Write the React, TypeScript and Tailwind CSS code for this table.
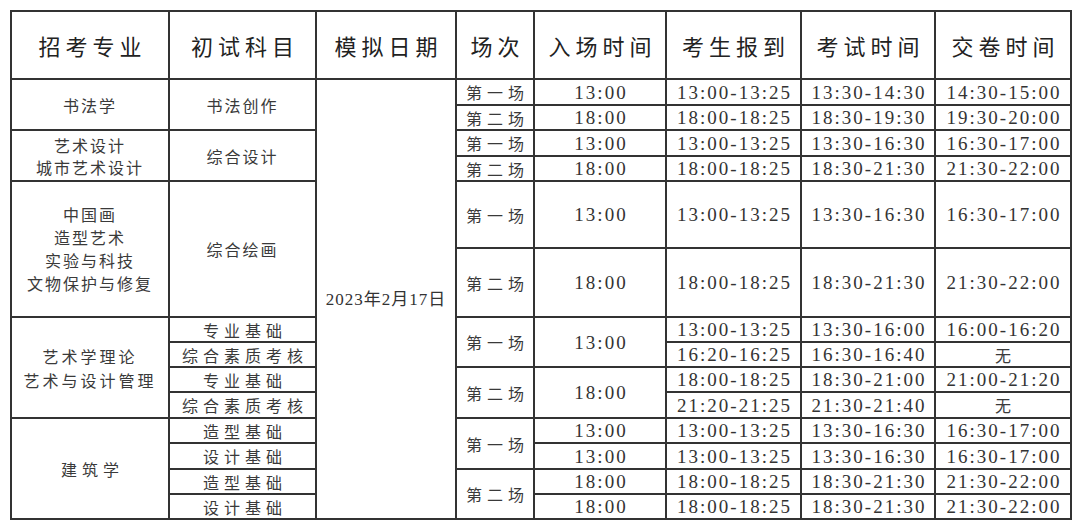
import React from "react";

const line = "border-2 border-[#333]";
const cjk = "font-['Noto_Sans_CJK_SC',sans-serif] text-[16px] text-[#3a3a3a]";
const num = "font-['Liberation_Serif','Noto_Sans_CJK_SC',serif] text-[19px] tracking-[2px] pl-[2px] text-[#333]";

function Td({
  children,
  rowSpan,
  className = "",
}: {
  children?: React.ReactNode;
  rowSpan?: number;
  className?: string;
}) {
  return (
    <td rowSpan={rowSpan} className={`${line} p-0 text-center align-middle leading-none ${className}`}>
      {children}
    </td>
  );
}

// 场次 cell
function Session({ n, rowSpan }: { n: string; rowSpan?: number }) {
  return (
    <Td rowSpan={rowSpan} className={`${cjk} tracking-[5px] pl-[5px]`}>
      {n}
    </Td>
  );
}

function T({ children, rowSpan }: { children: React.ReactNode; rowSpan?: number }) {
  return (
    <Td rowSpan={rowSpan} className={num}>
      {children}
    </Td>
  );
}

function Times({ a, b, c }: { a: string; b: string; c: string }) {
  return (
    <>
      <T>{a}</T>
      <T>{b}</T>
      {c === "无" ? <Td className={cjk}>无</Td> : <T>{c}</T>}
    </>
  );
}

const headers = ["招考专业", "初试科目", "模拟日期", "场次", "入场时间", "考生报到", "考试时间", "交卷时间"];

export default function App() {
  return (
    <div className="min-h-[530px] w-[1080px] bg-white pl-[10px] pt-[10px]">
      <table className="w-[1060px] table-fixed border-collapse">
        <colgroup>
          <col className="w-[158px]" />
          <col className="w-[147px]" />
          <col className="w-[140px]" />
          <col className="w-[78px]" />
          <col className="w-[132px]" />
          <col className="w-[135px]" />
          <col className="w-[134px]" />
          <col className="w-[136px]" />
        </colgroup>
        <thead>
          <tr className="h-[68px]">
            {headers.map((h) => (
              <th
                key={h}
                className={`${line} p-0 text-center align-middle font-['Noto_Sans_CJK_SC',sans-serif] text-[22px] font-normal tracking-[5px] pl-[5px] text-[#222]`}
              >
                {h}
              </th>
            ))}
          </tr>
        </thead>
        <tbody>
          <tr className="h-[26px]">
            <Td rowSpan={2} className={`${cjk} tracking-[2px]`}>书法学</Td>
            <Td rowSpan={2} className={`${cjk} tracking-[2px]`}>书法创作</Td>
            <Td rowSpan={14} className="font-['Liberation_Serif','Noto_Sans_CJK_SC',serif] text-[17px] tracking-[1px] text-[#333]">
              2023年2月17日
            </Td>
            <Session n="第一场" />
            <T>13:00</T>
            <Times a="13:00-13:25" b="13:30-14:30" c="14:30-15:00" />
          </tr>
          <tr className="h-[25px]">
            <Session n="第二场" />
            <T>18:00</T>
            <Times a="18:00-18:25" b="18:30-19:30" c="19:30-20:00" />
          </tr>
          <tr className="h-[26px]">
            <Td rowSpan={2} className={`${cjk} tracking-[2px]`}>
              <div className="leading-[22px]">
                艺术设计
                <br />
                城市艺术设计
              </div>
            </Td>
            <Td rowSpan={2} className={`${cjk} tracking-[2px]`}>综合设计</Td>
            <Session n="第一场" />
            <T>13:00</T>
            <Times a="13:00-13:25" b="13:30-16:30" c="16:30-17:00" />
          </tr>
          <tr className="h-[25px]">
            <Session n="第二场" />
            <T>18:00</T>
            <Times a="18:00-18:25" b="18:30-21:30" c="21:30-22:00" />
          </tr>
          <tr className="h-[67px]">
            <Td rowSpan={2} className={`${cjk} tracking-[2px]`}>
              <div className="leading-[23px]">
                中国画
                <br />
                造型艺术
                <br />
                实验与科技
                <br />
                文物保护与修复
              </div>
            </Td>
            <Td rowSpan={2} className={`${cjk} tracking-[2px]`}>综合绘画</Td>
            <Session n="第一场" />
            <T>13:00</T>
            <Times a="13:00-13:25" b="13:30-16:30" c="16:30-17:00" />
          </tr>
          <tr className="h-[69px]">
            <Session n="第二场" />
            <T>18:00</T>
            <Times a="18:00-18:25" b="18:30-21:30" c="21:30-22:00" />
          </tr>
          <tr className="h-[25px]">
            <Td rowSpan={4} className={`${cjk} tracking-[3px]`}>
              <div className="leading-[24px]">
                艺术学理论
                <br />
                艺术与设计管理
              </div>
            </Td>
            <Td className={`${cjk} tracking-[5px] pl-[5px]`}>专业基础</Td>
            <Session n="第一场" rowSpan={2} />
            <T rowSpan={2}>13:00</T>
            <Times a="13:00-13:25" b="13:30-16:00" c="16:00-16:20" />
          </tr>
          <tr className="h-[25px]">
            <Td className={`${cjk} tracking-[5px] pl-[5px]`}>综合素质考核</Td>
            <Times a="16:20-16:25" b="16:30-16:40" c="无" />
          </tr>
          <tr className="h-[25px]">
            <Td className={`${cjk} tracking-[5px] pl-[5px]`}>专业基础</Td>
            <Session n="第二场" rowSpan={2} />
            <T rowSpan={2}>18:00</T>
            <Times a="18:00-18:25" b="18:30-21:00" c="21:00-21:20" />
          </tr>
          <tr className="h-[26px]">
            <Td className={`${cjk} tracking-[5px] pl-[5px]`}>综合素质考核</Td>
            <Times a="21:20-21:25" b="21:30-21:40" c="无" />
          </tr>
          <tr className="h-[25px]">
            <Td rowSpan={4} className={`${cjk} tracking-[5px] pl-[5px]`}>建筑学</Td>
            <Td className={`${cjk} tracking-[5px] pl-[5px]`}>造型基础</Td>
            <Session n="第一场" rowSpan={2} />
            <T>13:00</T>
            <Times a="13:00-13:25" b="13:30-16:30" c="16:30-17:00" />
          </tr>
          <tr className="h-[26px]">
            <Td className={`${cjk} tracking-[5px] pl-[5px]`}>设计基础</Td>
            <T>13:00</T>
            <Times a="13:00-13:25" b="13:30-16:30" c="16:30-17:00" />
          </tr>
          <tr className="h-[25px]">
            <Td className={`${cjk} tracking-[5px] pl-[5px]`}>造型基础</Td>
            <Session n="第二场" rowSpan={2} />
            <T>18:00</T>
            <Times a="18:00-18:25" b="18:30-21:30" c="21:30-22:00" />
          </tr>
          <tr className="h-[25px]">
            <Td className={`${cjk} tracking-[5px] pl-[5px]`}>设计基础</Td>
            <T>18:00</T>
            <Times a="18:00-18:25" b="18:30-21:30" c="21:30-22:00" />
          </tr>
        </tbody>
      </table>
    </div>
  );
}
